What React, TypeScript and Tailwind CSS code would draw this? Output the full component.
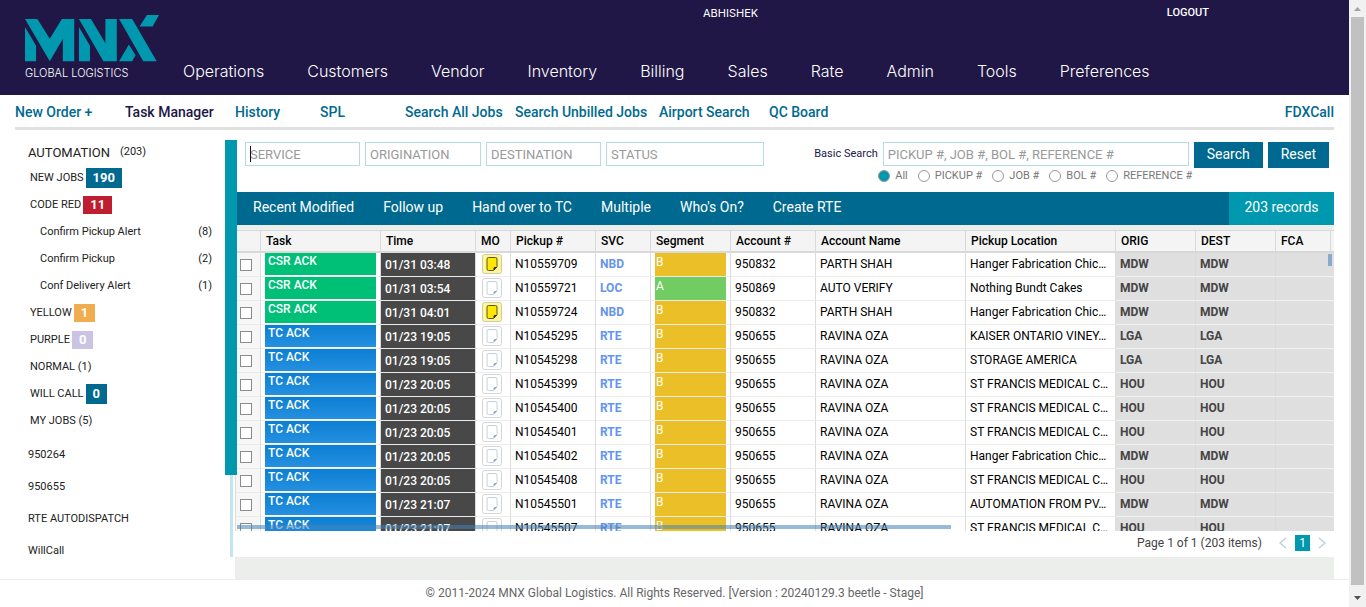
import React from "react";

const mainNav = ["Operations", "Customers", "Vendor", "Inventory", "Billing", "Sales", "Rate", "Admin", "Tools", "Preferences"];

const subNav = [
  { label: "New Order +", width: "w-[110px]" },
  { label: "Task Manager", width: "w-[110px]", active: true },
  { label: "History", width: "w-[85px]" },
  { label: "SPL", width: "w-[85px]" },
  { label: "Search All Jobs", width: "w-[110px]" },
  { label: "Search Unbilled Jobs", width: "w-[144px]" },
  { label: "Airport Search", width: "w-[110px]" },
  { label: "QC Board", width: "w-[80px]" },
];

type Row = {
  task: string;
  time: string;
  note: boolean;
  pickup: string;
  svc: string;
  segment: string;
  account: string;
  name: string;
  location: string;
  orig: string;
  dest: string;
};

const row = (
  task: string, time: string, note: boolean, pickup: string, svc: string, segment: string,
  account: string, name: string, location: string, station: string,
): Row => ({ task, time, note, pickup, svc, segment, account, name, location, orig: station, dest: station });

const rows: Row[] = [
  row("CSR ACK", "01/31 03:48", true, "N10559709", "NBD", "B", "950832", "PARTH SHAH", "Hanger Fabrication Chic…", "MDW"),
  row("CSR ACK", "01/31 03:54", false, "N10559721", "LOC", "A", "950869", "AUTO VERIFY", "Nothing Bundt Cakes", "MDW"),
  row("CSR ACK", "01/31 04:01", true, "N10559724", "NBD", "B", "950832", "PARTH SHAH", "Hanger Fabrication Chic…", "MDW"),
  row("TC ACK", "01/23 19:05", false, "N10545295", "RTE", "B", "950655", "RAVINA OZA", "KAISER ONTARIO VINEY…", "LGA"),
  row("TC ACK", "01/23 19:05", false, "N10545298", "RTE", "B", "950655", "RAVINA OZA", "STORAGE AMERICA", "LGA"),
  row("TC ACK", "01/23 20:05", false, "N10545399", "RTE", "B", "950655", "RAVINA OZA", "ST FRANCIS MEDICAL C…", "HOU"),
  row("TC ACK", "01/23 20:05", false, "N10545400", "RTE", "B", "950655", "RAVINA OZA", "ST FRANCIS MEDICAL C…", "HOU"),
  row("TC ACK", "01/23 20:05", false, "N10545401", "RTE", "B", "950655", "RAVINA OZA", "ST FRANCIS MEDICAL C…", "HOU"),
  row("TC ACK", "01/23 20:05", false, "N10545402", "RTE", "B", "950655", "RAVINA OZA", "Hanger Fabrication Chic…", "MDW"),
  row("TC ACK", "01/23 20:05", false, "N10545408", "RTE", "B", "950655", "RAVINA OZA", "ST FRANCIS MEDICAL C…", "HOU"),
  row("TC ACK", "01/23 21:07", false, "N10545501", "RTE", "B", "950655", "RAVINA OZA", "AUTOMATION FROM PV…", "MDW"),
  row("TC ACK", "01/23 21:07", false, "N10545507", "RTE", "B", "950655", "RAVINA OZA", "ST FRANCIS MEDICAL C…", "HOU"),
];

const columns = [
  { label: "", width: "w-[26px]" },
  { label: "Task", width: "w-[120px]" },
  { label: "Time", width: "w-[95px]" },
  { label: "MO", width: "w-[35px]" },
  { label: "Pickup #", width: "w-[85px]" },
  { label: "SVC", width: "w-[55px]" },
  { label: "Segment", width: "w-[80px]" },
  { label: "Account #", width: "w-[85px]" },
  { label: "Account Name", width: "w-[150px]" },
  { label: "Pickup Location", width: "w-[150px]" },
  { label: "ORIG", width: "w-[80px]" },
  { label: "DEST", width: "w-[80px]" },
  { label: "FCA", width: "w-[55px]" },
];

function Logo() {
  return (
    <a href="#" className="block w-[134px] text-white">
      <svg viewBox="0 0 400 140" className="block h-[47px] w-[134px]" fill="#0098ae" aria-hidden="true">
        <path d="M0 12H37L74 71 110 12H147V138H113V71L74 138Z" />
        <path d="M0 36L33 92V138H0Z" />
        <path d="M161 12H197L240 84V12H274V138H234Z" />
        <path d="M161 36L194 92V138H161Z" />
        <path d="M281 12H320L393 138H353Z" />
        <path d="M364 0H400L381 34H342Z" />
        <path d="M310 88L330 120 320 138H281Z" />
      </svg>
      <span className="mt-1 block whitespace-nowrap font-['Inter',sans-serif] text-[11px] font-light leading-[14px]">GLOBAL LOGISTICS</span>
    </a>
  );
}

function NoteIcon({ filled }: { filled: boolean }) {
  return (
    <svg viewBox="0 0 20 20" className="mx-auto block h-5 w-5" aria-hidden="true">
      <rect x="0.5" y="0.5" width="19" height="19" rx="2" fill={filled ? "#fff59d" : "#fff"} stroke={filled ? "#cfcba8" : "#d2d4d6"} />
      <path
        d="M6.500 3.500H13.500Q15 3.500 15 5V13L11.500 16.500H6.500Q5 16.500 5 15V5Q5 3.500 6.500 3.500Z"
        fill={filled ? "#ffe600" : "#fff"}
        stroke={filled ? "#5a5320" : "#c3d0dd"}
      />
      <path d="M11.500 16.500V14.500Q11.500 13 13 13H15Z" fill={filled ? "#222" : "#8fa6bb"} />
    </svg>
  );
}

function Badge({ children, className }: { children: React.ReactNode; className: string }) {
  return <span className={"mb-[2px] px-[7px] text-[13px] font-bold text-white " + className}>{children}</span>;
}

function SideLink({ children }: { children: React.ReactNode }) {
  return <a href="#" className="flex h-[27px] items-center gap-[2px] pl-[15px]">{children}</a>;
}

function SideSubLink({ label, count }: { label: string; count: number }) {
  return (
    <a href="#" className="flex h-[27px] items-center justify-between pl-[25px] pr-[13px]">
      <span>{label}</span>
      <span>({count})</span>
    </a>
  );
}

function Sidebar() {
  return (
    <nav className="w-[210px] shrink-0 text-[11px] text-[#222]">
      <a href="#" className="flex h-[25px] items-center gap-[10px] pl-[13px]">
        <span className="text-[13px]">AUTOMATION</span>
        <span>(203)</span>
      </a>
      <SideLink>NEW JOBS <Badge className="bg-[#00698f] leading-5">190</Badge></SideLink>
      <SideLink>CODE RED <Badge className="bg-[#bf1e2e] leading-[18px]">11</Badge></SideLink>
      <SideSubLink label="Confirm Pickup Alert" count={8} />
      <SideSubLink label="Confirm Pickup" count={2} />
      <SideSubLink label="Conf Delivery Alert" count={1} />
      <SideLink>YELLOW <Badge className="bg-[#f0ad4e] leading-[18px]">1</Badge></SideLink>
      <SideLink>PURPLE <Badge className="bg-[#cbc3e3] leading-[18px]">0</Badge></SideLink>
      <SideLink>NORMAL (1)</SideLink>
      <SideLink>WILL CALL <Badge className="bg-[#00698f] leading-5">0</Badge></SideLink>
      <SideLink>MY JOBS (5)</SideLink>
      <div className="mt-1">
        {["950264", "950655", "RTE AUTODISPATCH", "WillCall"].map((t) => (
          <a key={t} href="#" className="flex h-8 items-center pl-[13px]">{t}</a>
        ))}
      </div>
    </nav>
  );
}

const inputClass = "h-6 min-w-0 border border-[#b5dce2] bg-white px-1 text-[13px] text-[#222] outline-none placeholder:text-[#999]";

function Filters() {
  const options = ["All", "PICKUP #", "JOB #", "BOL #", "REFERENCE #"];
  return (
    <form className="flex h-[52px] items-start pl-2 pr-[5px] pt-[2px]" onSubmit={(e) => e.preventDefault()}>
      <div className="flex gap-[5px]">
        <div className="relative flex">
          <input aria-label="Service" placeholder="SERVICE" className={inputClass + " w-[115px]"} />
          <span className="absolute left-[5px] top-1 h-4 w-px bg-[#111]" />
        </div>
        <input aria-label="Origination" placeholder="ORIGINATION" className={inputClass + " w-[116px]"} />
        <input aria-label="Destination" placeholder="DESTINATION" className={inputClass + " w-[115px]"} />
        <input aria-label="Status" placeholder="STATUS" className={inputClass + " w-[158px]"} />
      </div>
      <div className="ml-auto">
        <div className="flex items-start gap-[5px]">
          <label htmlFor="basic-search" className="text-[11px] leading-6 text-[#201747]">Basic Search</label>
          <input id="basic-search" placeholder="PICKUP #, JOB #, BOL #, REFERENCE #" className={inputClass + " w-[306px]"} />
          <button type="submit" className="h-[26px] bg-[#00698f] px-[13px] pb-[2px] text-sm text-white">Search</button>
          <button type="reset" className="h-[26px] bg-[#00698f] px-[13px] pb-[2px] text-sm text-white">Reset</button>
        </div>
        <div className="flex h-4 items-center gap-[10px] pl-16 text-[11px] text-[#777]">
          {options.map((o, i) => (
            <label key={o} className="flex items-center gap-[5px] whitespace-nowrap">
              <input
                type="radio"
                name="search-by"
                defaultChecked={i === 0}
                className="h-3 w-3 appearance-none rounded-full border border-[#999] bg-white checked:bg-[#0098ae]"
              />
              {o}
            </label>
          ))}
        </div>
      </div>
    </form>
  );
}

function Toolbar() {
  return (
    <div className="flex h-[33px] bg-[#00698f] text-sm text-white">
      <div className="flex flex-1 gap-[29px] pl-4 leading-[31px]">
        {["Recent Modified", "Follow up", "Hand over to TC", "Multiple", "Who's On?", "Create RTE"].map((t) => (
          <button key={t} type="button" className="h-[31px]">{t}</button>
        ))}
      </div>
      <div className="w-[105px] bg-[#0098ae] text-center leading-[31px]">203 records</div>
    </div>
  );
}

function JobTable() {
  const cell = "h-6 border-b border-r border-b-[#ebebeb] border-r-[#dcdcdc] p-0";
  const text = cell + " whitespace-nowrap pb-[2px] pl-1";
  const station = "h-6 whitespace-nowrap border-b border-r border-b-[#f2f2f2] border-r-[#dadada] bg-[#dfdfdf] p-0 pb-[2px] pl-1 font-bold text-[#444]";
  const head = "h-[23px] border-b-2 border-t border-[#d9d9d9] bg-[#f4f4f4] p-0";
  return (
    <div className="relative h-[301px] overflow-hidden bg-white">
      <table className="w-full table-fixed border-separate border-spacing-0 text-[12px] leading-4 text-black">
        <thead>
          <tr>
            {columns.map((c, i) => (
              <th key={i} className={head + " border-r pl-[5px] text-left font-medium " + c.width}>
                {c.label}
              </th>
            ))}
            <th className={head} />
          </tr>
        </thead>
        <tbody>
          {rows.map((r) => (
            <tr key={r.pickup}>
              <td className={cell + " border-l border-l-[#dcdcdc] bg-[#f6f6f6]"}>
                <input
                  type="checkbox"
                  aria-label={"Select " + r.pickup}
                  className="ml-1 block h-3 w-3 appearance-none border border-[#8c8c8c] bg-white"
                />
              </td>
              <td className={cell + " pl-1 pr-1 align-top"}>
                <div
                  className={
                    "h-[22px] pl-[3px] leading-4 font-medium text-white " +
                    (r.task === "CSR ACK" ? "bg-[#00c078]" : "bg-linear-to-b from-[#0a7fd2] to-[#2490e0]")
                  }
                >
                  {r.task}
                </div>
              </td>
              <td className="h-6 border-b border-r border-b-[#ebebeb] border-r-[#dcdcdc] bg-[#484848] p-0 pl-1 font-medium text-white">{r.time}</td>
              <td className={cell + " pb-[2px] pr-[3px]"}><NoteIcon filled={r.note} /></td>
              <td className={text}>{r.pickup}</td>
              <td className={text + " font-bold text-[#6495ed]"}>{r.svc}</td>
              <td className={cell + " pl-1 pr-1 align-top"}>
                <div className={"h-[23px] pl-px leading-[18px] text-white " + (r.segment === "A" ? "bg-[#72cc64]" : "bg-[#ebbf28]")}>{r.segment}</div>
              </td>
              <td className={text}>{r.account}</td>
              <td className={text}>{r.name}</td>
              <td className={text}>{r.location}</td>
              <td className={station}>{r.orig}</td>
              <td className={station}>{r.dest}</td>
              <td colSpan={2} className="border-b border-[#f2f2f2] bg-[#dfdfdf] p-0" />
            </tr>
          ))}
        </tbody>
      </table>
      <div className="absolute right-[2px] top-6 h-[12px] w-1 bg-[#8ba9cd]" />
      <div className="absolute bottom-[2px] left-[2px] h-1 w-[65%] bg-[#4682b4]/55" />
    </div>
  );
}

function Pager() {
  return (
    <div className="flex h-[26px] items-center justify-end gap-2 bg-white pb-[2px] pr-2 text-[12px] text-[#444]">
      <span className="mr-[9px]">Page 1 of 1 (203 items)</span>
      <button type="button" aria-label="Previous page">
        <svg viewBox="0 0 8 12" className="block h-3 w-2" fill="none" stroke="#b9cfe0" strokeWidth="1.3"><path d="M7 1L1 6L7 11" /></svg>
      </button>
      <button type="button" className="h-4 w-[15px] bg-[#0098ae] leading-4 text-white">1</button>
      <button type="button" aria-label="Next page">
        <svg viewBox="0 0 8 12" className="block h-3 w-2" fill="none" stroke="#b9cfe0" strokeWidth="1.3"><path d="M1 1L7 6L1 11" /></svg>
      </button>
    </div>
  );
}

function PageScrollbar() {
  return (
    <div className="flex w-[17px] shrink-0 flex-col items-center bg-[#f1f1f1]" aria-hidden="true">
      <svg viewBox="0 0 17 17" className="h-[17px] w-[17px]"><path d="M5 11L8.500 7L12 11Z" fill="#a3a3a3" /></svg>
      <div className="w-[13px] flex-1 bg-[#c1c1c1]" />
      <svg viewBox="0 0 17 22" className="h-[22px] w-[17px]"><path d="M5 11L8.500 15L12 11Z" fill="#505050" /></svg>
    </div>
  );
}

export default function App() {
  return (
    <div className="flex min-h-screen bg-white font-['Roboto',sans-serif]">
      <div className="flex min-w-0 flex-1 flex-col">
        <header className="flex h-[95px] bg-[#201747] pl-[25px] text-white">
          <div className="pt-[15px]"><Logo /></div>
          <div className="flex flex-1 flex-col justify-between pl-6">
            <div className="flex justify-between pl-[520px] pr-[140px] pt-px text-[11px] leading-6">
              <a href="#" className="font-['Inter',sans-serif]">ABHISHEK</a>
              <a href="#" className="font-medium">LOGOUT</a>
            </div>
            <nav className="flex gap-[43px] pb-3 font-['Inter',sans-serif] text-base font-light leading-6">
              {mainNav.map((t) => <a key={t} href="#">{t}</a>)}
            </nav>
          </div>
        </header>

        <nav className="mx-[15px] flex h-[35px] border-b-[3px] border-[#dfe0df] text-sm font-medium leading-[34px] text-[#00698f]">
          {subNav.map((s) => (
            <a key={s.label} href="#" className={"shrink-0 whitespace-nowrap " + s.width + (s.active ? " text-[#201747]" : "")}>{s.label}</a>
          ))}
          <a href="#" className="ml-auto">FDXCall</a>
        </nav>

        <main className="mx-[15px] mt-[10px] flex">
          <Sidebar />
          <div className="flex w-[10px] shrink-0 flex-col">
            <div className="relative z-10 h-[335px] w-3 bg-[#0098ae]" />
            <div className="ml-[5px] h-[82px] w-[3px] bg-[#bfe6f2]" />
          </div>
          <div className="min-w-0 flex-1 bg-[#ebeeeb]">
            <div className="bg-white pl-[2px]"><Filters /></div>
            <div className="pl-[2px]"><Toolbar /></div>
            <div className="h-[5px]" />
            <JobTable />
            <Pager />
            <div className="h-[22px]" />
          </div>
        </main>

        <footer className="flex-1 border-t border-[#ececec] text-center text-[12px] leading-[26px] text-[#666]">
          © 2011-2024 MNX Global Logistics. All Rights Reserved. [Version : 20240129.3 beetle - Stage]
        </footer>
      </div>
      <PageScrollbar />
    </div>
  );
}
